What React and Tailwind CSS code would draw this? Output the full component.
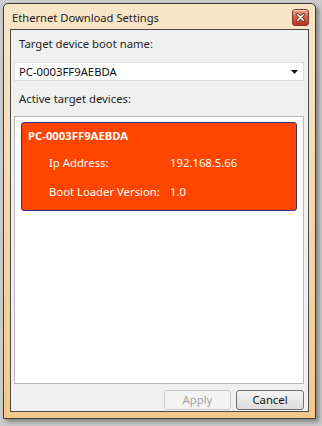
import React from 'react';

const font = { fontFamily: '"Noto Sans", "Open Sans", sans-serif' };

const CloseButton = () => (
  <div className="w-[17px] h-[17px] rounded-[3px] border border-[#7a3a30] bg-gradient-to-b from-[#eba590] via-[#d45a42] to-[#c0321c] flex items-center justify-center shadow-[inset_0_1px_0_rgba(255,255,255,0.5)]">
    <svg width="9" height="9" viewBox="0 0 9 9">
      <path d="M1.5 1.5 L7.5 7.5 M7.5 1.5 L1.5 7.5" stroke="#5a2a22" strokeWidth="3" strokeLinecap="round" />
      <path d="M1.5 1.5 L7.5 7.5 M7.5 1.5 L1.5 7.5" stroke="#ffffff" strokeWidth="1.6" strokeLinecap="round" />
    </svg>
  </div>
);

const App = () => {
  return (
    <div className="w-[322px] h-[426px] bg-[#cbcbcb] overflow-hidden pt-[3px] pl-[3px]" style={font}>
      {/* window */}
      <div className="w-[313px] h-[416px] border border-[#3a3a3a] rounded-t-[5px] bg-gradient-to-b from-[#f8e6c8] to-[#f2c98a] flex flex-col shadow-[3px_3px_4px_rgba(0,0,0,0.35)]">
        {/* title bar */}
        <div className="h-[25px] flex items-center justify-between pl-[8px] pr-[6px] pt-[2px]">
          <span className="text-[11.2px] text-[#1b1b1b] leading-none">Ethernet Download Settings</span>
          <CloseButton />
        </div>

        {/* client area */}
        <div className="mx-[6px] border border-[#4a4a4a] bg-[#f0f0f0] h-[383px] flex flex-col text-[11.3px]">
          <div className="pl-[8px] pt-[6px] h-[16px] box-content leading-[16px] text-[#1e1e1e]">Target device boot name:</div>

          <div className="mt-[10px] ml-[3px] w-[290px] h-[19px] bg-white border border-[#dcdcdc] flex items-center justify-between pl-[4px] pr-[5px]">
            <span className="leading-none text-[#111]">PC-0003FF9AEBDA</span>
            <svg width="7" height="4" viewBox="0 0 7 4">
              <path d="M0 0 H7 L3.5 4 Z" fill="#111" />
            </svg>
          </div>

          <div className="pl-[8px] mt-[10px] h-[16px] leading-[16px] text-[#1e1e1e]">Active target devices:</div>

          <div className="mt-[9px] ml-[3px] w-[290px] h-[268px] bg-white border border-[#b8b8b8] px-[6px] pt-[5px]">
            <div className="h-[89px] bg-[#ff4500] border border-[#3a2a80] rounded-[3px] pl-[6px] text-white">
              <div className="pt-[5px] h-[16px] box-content leading-[16px] font-bold">PC-0003FF9AEBDA</div>
              <div className="flex mt-[11px] h-[16px] leading-[16px]">
                <span className="pl-[21px] w-[142px]">Ip Address:</span>
                <span>192.168.5.66</span>
              </div>
              <div className="flex mt-[13px] h-[16px] leading-[16px]">
                <span className="pl-[21px] w-[142px]">Boot Loader Version:</span>
                <span>1.0</span>
              </div>
            </div>
          </div>

          <div className="flex justify-end gap-[5px] pr-[4px] mt-[6px]">
            <button className="w-[67px] h-[20px] rounded-[3px] border border-[#c8c8c8] bg-[#f4f4f4] leading-none text-[#a3a3a3]">Apply</button>
            <button className="w-[68px] h-[20px] rounded-[3px] border border-[#707070] bg-gradient-to-b from-[#f4f4f4] to-[#dcdcdc] leading-none text-[#111]">Cancel</button>
          </div>
        </div>
      </div>
    </div>
  );
};

export default App;
